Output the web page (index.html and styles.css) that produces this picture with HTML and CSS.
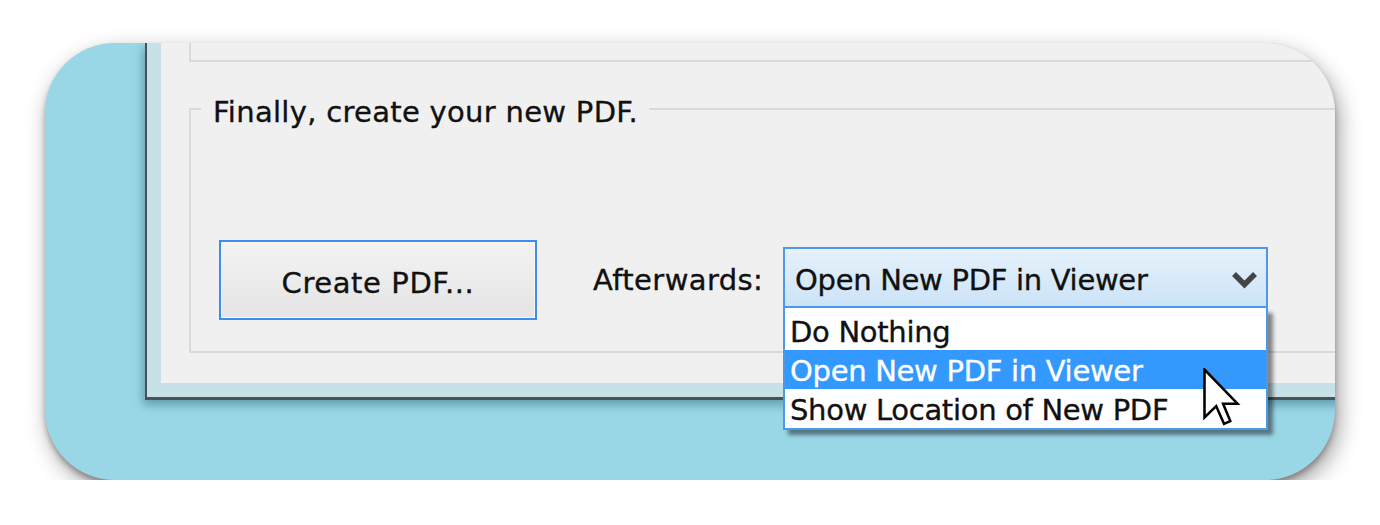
FILE: index.html
```
<!DOCTYPE html>
<html lang="en">
<head>
    <meta charset="UTF-8">
    <meta name="viewport" content="width=device-width, initial-scale=1.0">
    <title>Create PDF</title>
    <link rel="stylesheet" href="styles.css">
</head>
<body>
    <div class="frame">
        <div class="window">
            <div class="client">
                <div class="group-prev"></div>
                <fieldset class="group">
                    <legend>Finally, create your new PDF.</legend>
                    <div class="actions">
                        <button type="button" class="btn-create">Create PDF...</button>
                        <label class="after-label" for="afterwards">Afterwards:</label>
                        <div class="combo" id="afterwards">
                            <div class="combo-box">
                                <span>Open New PDF in Viewer</span>
                                <svg class="chevron" width="25" height="18" viewBox="0 0 25 18">
                                    <polyline points="2,3 12.5,13.5 23,3" fill="none" stroke="#444" stroke-width="5.5"/>
                                </svg>
                            </div>
                            <ul class="combo-list">
                                <li>Do Nothing</li>
                                <li class="selected">Open New PDF in Viewer</li>
                                <li>Show Location of New PDF</li>
                            </ul>
                            <!-- mouse pointer resting on the highlighted option -->
                            <svg class="pointer" width="39" height="60" viewBox="0 0 13 20">
                                <polygon points="0.5,0.5 0.5,16.5 4.4,12.7 7,18.6 9.1,17.7 6.7,11.9 11.5,11.9" fill="#fff" stroke="#000" stroke-width="0.85"/>
                            </svg>
                        </div>
                    </div>
                </fieldset>
            </div>
        </div>
    </div>
</body>
</html>
```
FILE: styles.css
```
body {
    margin: 0;
    background-color: #fff;
    font-family: "DejaVu Sans", Verdana, sans-serif;
    font-size: 29px;
    color: #111;
    -webkit-text-stroke: 0.35px currentColor;
}
.frame {
    display: flex;
    align-items: flex-start;
    box-sizing: border-box;
    width: 1290px;
    height: 437px;
    margin: 43px 0 0 45px;
    padding-left: 100px;
    border-radius: 70px;
    overflow: hidden;
    background-color: #99d7e7;
    box-shadow: 0 4px 5px rgba(70, 50, 50, 0.35), 4px 9px 22px rgba(0, 0, 0, 0.38);
}
.window {
    flex: none;
    box-sizing: border-box;
    width: 1300px;
    height: 357px;
    padding: 0 0 14px 14px;
    border-left: 2px solid #4a5256;
    border-bottom: 3px solid #4a5256;
    background-color: #c8e1e8;
    box-shadow: -2px 5px 9px rgba(20, 70, 90, 0.4);
}
.client {
    box-sizing: border-box;
    height: 100%;
    padding-left: 28px;
    background-color: #f0f0f0;
}
.group-prev {
    height: 17px;
    border-left: 2px solid #dadada;
    border-bottom: 2px solid #dadada;
}
.group {
    margin: 27px 0 0 0;
    padding: 111px 0 31px 28px;
    border: 2px solid #dadada;
    min-width: 0;
}
.group legend {
    margin-left: -18px;
    padding: 6px 11px 0 12px;
    letter-spacing: 0.3px;
}
.actions {
    display: flex;
    align-items: center;
    height: 80px;
}
.btn-create {
    box-sizing: border-box;
    width: 318px;
    height: 80px;
    margin-right: 56px;
    padding: 6px 0 0;
    border: 2px solid #3c8df2;
    box-shadow: inset 0 0 0 1px #fdf7ea;
    background: linear-gradient(#f3f3f3, #e4e4e4);
    font: inherit;
    letter-spacing: 0.6px;
    color: inherit;
}
.after-label {
    width: 190px;
    letter-spacing: 0.4px;
}
.combo {
    position: relative;
    width: 485px;
    margin-bottom: 5px;
}
.combo-box {
    display: flex;
    align-items: center;
    justify-content: space-between;
    box-sizing: border-box;
    height: 61px;
    padding: 5px 9px 0 10px;
    border: 2px solid #4d98e8;
    background: linear-gradient(#e5f1fb, #cce3f7);
    letter-spacing: -0.3px;
}
.combo-list {
    position: absolute;
    left: 0;
    top: 100%;
    box-sizing: border-box;
    width: 100%;
    margin: 0;
    padding: 3px 0 0;
    list-style: none;
    background-color: #fff;
    border: 2px solid #4d98e8;
    border-top: none;
    box-shadow: 5px 5px 4px rgba(0, 0, 0, 0.45);
    letter-spacing: -0.3px;
}
.combo-list li {
    box-sizing: border-box;
    height: 39px;
    padding: 4px 0 0 5px;
    line-height: 35px;
    white-space: nowrap;
}
.combo-list .selected {
    background-color: #3399ff;
    color: #fff;
}
.pointer {
    position: absolute;
    left: 420px;
    top: 121px;
    -webkit-text-stroke: 0;
}
```
